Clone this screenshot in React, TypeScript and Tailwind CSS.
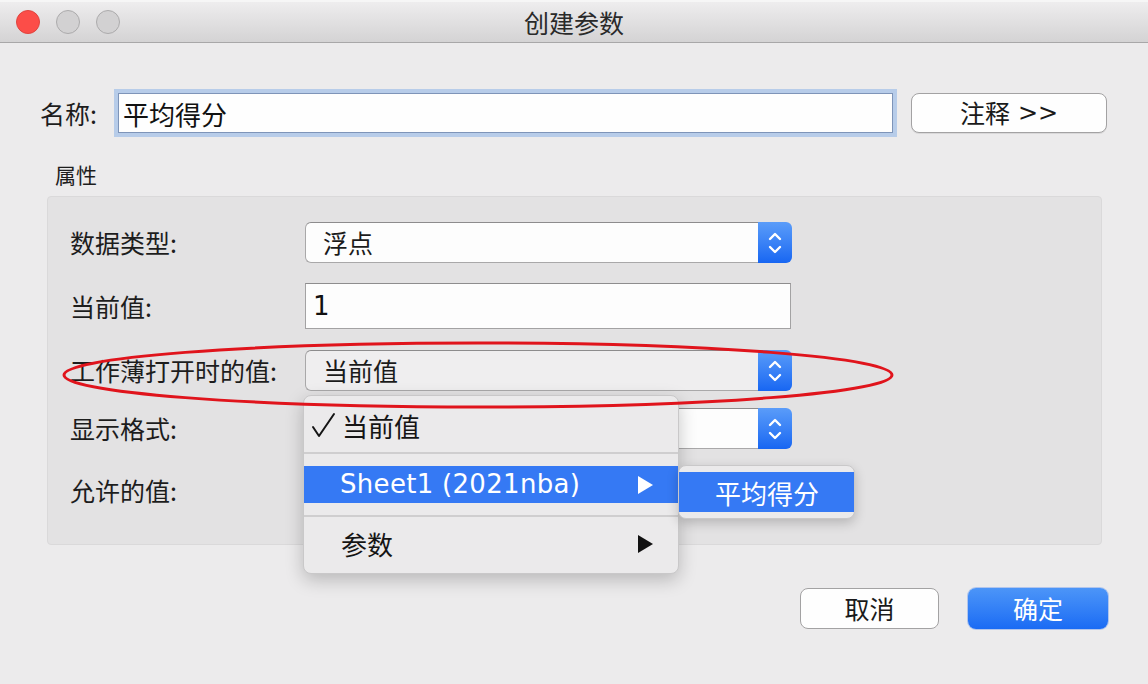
const cjk = { fontFamily: '"Noto Sans CJK SC", "Noto Sans", sans-serif' };
const latin = { fontFamily: '"DejaVu Sans", "Noto Sans CJK SC", sans-serif' };

function Stepper() {
  return (
    <div className="w-[34px] h-full rounded-r-[6px] bg-gradient-to-b from-[#5a9cf9] to-[#1766f2] flex items-center justify-center">
      <svg width="16" height="26" viewBox="0 0 16 26" fill="none" stroke="white" strokeWidth="2.4" strokeLinecap="round" strokeLinejoin="round">
        <path d="M3 9 L8 4 L13 9" />
        <path d="M3 17 L8 22 L13 17" />
      </svg>
    </div>
  );
}

function Select({ value, gray }: { value: string; gray?: boolean }) {
  return (
    <div className="w-[487px] h-[41px] flex">
      <div
        className={`flex-1 flex items-center pl-[17px] rounded-l-[6px] border border-r-0 border-[#a9a8a9] border-t-[#8d8c8d] text-[25px] text-[#1b1b1b] ${
          gray ? 'bg-[#efeeef]' : 'bg-[#fdfdfd]'
        }`}
      >
        {value}
      </div>
      <Stepper />
    </div>
  );
}

function Row({ label, children, className }: { label: string; children: React.ReactNode; className: string }) {
  return (
    <div className={`flex items-center pl-[22px] ${className}`}>
      <div className="w-[235px] text-[25px] text-[#1d1d1d] leading-none">{label}</div>
      {children}
    </div>
  );
}

function Arrow({ color }: { color: string }) {
  return (
    <svg width="17" height="20" viewBox="0 0 17 20">
      <path d="M1 1 L16 10 L1 19 Z" fill={color} />
    </svg>
  );
}

export default function App() {
  return (
    <div className="relative w-[1148px] h-[684px] overflow-hidden bg-[#ecebec]" style={cjk}>
      {/* title bar */}
      <div className="h-[43px] grid grid-cols-[1fr_auto_1fr] items-center bg-gradient-to-b from-[#eeedee] to-[#d4d3d4] border-b border-[#a8a7a8] border-t-2 border-t-[#f6f6f6]">
        <div className="flex items-center gap-[16px] pl-[16px]">
          <div className="w-[24px] h-[24px] rounded-full bg-[#fc4d48] border border-[#e0443e]" />
          <div className="w-[24px] h-[24px] rounded-full bg-[#d2d1d2] border border-[#acabac]" />
          <div className="w-[24px] h-[24px] rounded-full bg-[#d2d1d2] border border-[#acabac]" />
        </div>
        <div className="text-[25px] text-[#2a2a2a] leading-none">创建参数</div>
        <div />
      </div>

      {/* name row */}
      <div className="flex items-center pl-[40px] mt-[50px]">
        <div className="w-[78px] text-[25px] text-[#1d1d1d] leading-none">名称:</div>
        <div className="w-[775px] h-[40px] flex items-center pl-[4px] bg-[#fefefe] border border-[#7e94b8] shadow-[0_0_0_4px_rgba(140,178,232,0.55)] text-[26px] text-[#111]">
          平均得分
        </div>
        <button className="ml-[18px] w-[196px] h-[40px] rounded-[8px] bg-[#fefefe] border border-[#a3a2a3] shadow-[0_1px_0_rgba(0,0,0,0.08)] text-[25px] text-[#1a1a1a] flex items-center justify-center gap-[8px]">
          <span>注释</span>
          <span style={latin} className="text-[24px]">&gt;&gt;</span>
        </button>
      </div>

      {/* properties */}
      <div className="pl-[55px] mt-[31px] h-[22px] text-[21px] leading-none text-[#1d1d1d]">属性</div>
      <div className="ml-[47px] mt-[10px] w-[1055px] h-[349px] rounded-[4px] bg-[#e3e2e3] border border-[#dad9da] flex flex-col">
        <Row label="数据类型:" className="mt-[25px] h-[41px]">
          <Select value="浮点" />
        </Row>
        <Row label="当前值:" className="mt-[20px] h-[46px]">
          <div className="w-[486px] h-[46px] flex items-center pl-[7px] bg-[#fdfdfd] border border-[#a3a2a3] border-t-[#8e8d8e] text-[26px] text-[#111]" style={latin}>
            1
          </div>
        </Row>
        <Row label="工作薄打开时的值:" className="mt-[21px] h-[41px]">
          <Select value="当前值" gray />
        </Row>
        <Row label="显示格式:" className="mt-[17px] h-[41px]">
          <Select value="" />
        </Row>
        <Row label="允许的值:" className="mt-[21px] h-[41px]">
          <Select value="" />
        </Row>
      </div>

      {/* bottom buttons */}
      <div className="flex justify-end gap-[29px] pr-[40px] mt-[43px]">
        <button className="w-[139px] h-[41px] rounded-[8px] bg-[#fefefe] border border-[#a3a2a3] text-[25px] text-[#1a1a1a] flex items-center justify-center">
          取消
        </button>
        <button className="w-[140px] h-[41px] rounded-[8px] bg-gradient-to-b from-[#4c95f8] to-[#1a6bf4] text-[25px] text-white flex items-center justify-center shadow-[0_0_0_1px_rgba(40,110,240,0.3)]">
          确定
        </button>
      </div>

      {/* popup menu */}
      <div className="absolute left-[303px] top-[395px] w-[376px] h-[179px] rounded-[8px] bg-[#ebeaeb] border border-[#c9c8c9] shadow-[0_6px_18px_rgba(0,0,0,0.22)] flex flex-col pt-[5px]">
        <div className="h-[48px] flex items-center pl-[7px] text-[26px] text-[#151515]">
          <span className="w-[31px] flex items-center">
            <svg width="25" height="26" viewBox="0 0 25 26" fill="none" stroke="#151515" strokeWidth="2" strokeLinecap="round" strokeLinejoin="round">
              <path d="M2 15 L8 24 L23 2" />
            </svg>
          </span>
          <span>当前值</span>
        </div>
        <div className="mt-[3px] h-[2px] bg-[#cfcecf]" />
        <div className="mt-[12px] h-[37px] bg-[#3579f4] flex items-center justify-between pl-[36px] pr-[24px] text-white text-[26px] tracking-[0.3px]" style={latin}>
          <span>Sheet1 (2021nba)</span>
          <Arrow color="#ffffff" />
        </div>
        <div className="mt-[12px] h-[2px] bg-[#cfcecf]" />
        <div className="mt-[8px] h-[37px] flex items-center justify-between pl-[37px] pr-[24px] text-[26px] text-[#151515]">
          <span>参数</span>
          <Arrow color="#111111" />
        </div>
      </div>

      {/* submenu */}
      <div className="absolute left-[678px] top-[465px] w-[177px] h-[54px] rounded-[8px] bg-[#ebeaeb] border border-[#c9c8c9] shadow-[0_4px_12px_rgba(0,0,0,0.2)] pt-[6px]">
        <div className="h-[40px] bg-[#3579f4] flex items-center pl-[36px] text-white text-[26px]">平均得分</div>
      </div>

      {/* red annotation */}
      <svg className="absolute inset-0 pointer-events-none" width="1148" height="684" viewBox="0 0 1148 684">
        <ellipse cx="478" cy="375" rx="414" ry="32" fill="none" stroke="#e0141c" strokeWidth="3" />
      </svg>
    </div>
  );
}
